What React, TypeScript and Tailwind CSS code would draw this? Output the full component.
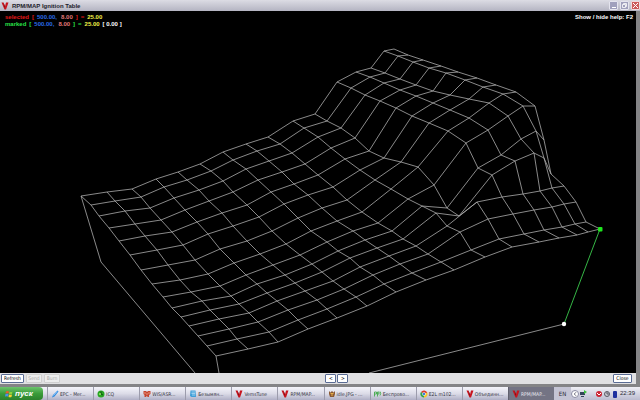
import React from 'react';
import { ChevronLeft } from 'lucide-react';

type Point = [number, number];

interface Task {
  label: string;
  icon: React.ReactNode;
  active?: boolean;
}

// ─── Surface data: one row per MAP bin, one point per RPM bin ─────────────────
const SURFACE: Point[][] = [
  [[81, 196], [107, 192], [132, 189], [156, 179], [178, 172], [200, 164], [223, 152], [246, 144], [268, 137], [293, 121], [315, 114], [337, 82], [356, 72], [371, 68], [384, 51], [394, 49]],
  [[91, 205], [115, 201], [141, 197], [164, 187], [187, 180], [211, 171], [233, 160], [257, 151], [280, 144], [304, 128], [327, 121], [351, 88], [370, 77], [385, 73], [398, 56], [408, 55]],
  [[99, 216], [125, 211], [150, 208], [174, 198], [199, 190], [223, 181], [246, 169], [269, 161], [292, 153], [318, 137], [341, 128], [365, 95], [384, 83], [400, 79], [413, 62], [423, 60]],
  [[109, 228], [135, 224], [161, 220], [185, 210], [209, 201], [233, 192], [258, 180], [282, 172], [305, 164], [331, 148], [355, 138], [380, 101], [400, 90], [416, 85], [429, 68], [441, 66]],
  [[119, 241], [145, 236], [172, 232], [197, 222], [222, 213], [247, 205], [271, 192], [294, 184], [318, 175], [345, 159], [369, 151], [396, 108], [416, 96], [433, 91], [446, 73], [458, 72]],
  [[130, 255], [157, 250], [183, 245], [208, 234], [233, 226], [259, 217], [284, 204], [308, 195], [333, 187], [360, 170], [384, 158], [412, 116], [433, 103], [450, 95], [465, 80], [477, 78]],
  [[141, 270], [168, 265], [195, 260], [220, 249], [247, 241], [272, 231], [298, 218], [322, 208], [347, 200], [375, 180], [401, 162], [429, 123], [450, 110], [469, 99], [483, 87], [496, 85]],
  [[152, 284], [180, 280], [208, 274], [234, 263], [260, 254], [286, 244], [311, 231], [337, 221], [362, 212], [391, 189], [418, 167], [448, 131], [469, 118], [489, 103], [503, 94], [516, 92]],
  [[163, 297], [191, 292], [220, 286], [246, 275], [273, 265], [300, 255], [327, 242], [353, 231], [378, 223], [408, 199], [434, 185], [466, 143], [488, 130], [508, 116], [523, 106], [535, 106]],
  [[172, 308], [202, 301], [231, 296], [257, 284], [285, 275], [312, 264], [338, 251], [365, 240], [392, 231], [422, 206], [447, 208], [478, 168], [501, 155], [521, 139], [536, 131], [544, 140]],
  [[181, 317], [210, 310], [239, 304], [267, 293], [295, 283], [322, 272], [350, 258], [377, 248], [403, 239], [436, 213], [459, 216], [492, 175], [515, 161], [534, 153], [544, 158], [551, 174]],
  [[189, 326], [219, 319], [249, 313], [277, 301], [305, 291], [333, 281], [360, 267], [389, 256], [416, 246], [447, 226], [477, 202], [502, 197], [523, 194], [540, 191], [552, 188], [564, 186]],
  [[198, 336], [229, 329], [258, 322], [288, 310], [317, 300], [344, 289], [373, 275], [400, 264], [428, 254], [460, 232], [488, 219], [513, 214], [534, 210], [552, 207], [564, 204], [576, 202]],
  [[207, 346], [237, 339], [269, 332], [298, 320], [327, 309], [356, 297], [384, 284], [412, 273], [441, 262], [471, 250], [499, 239], [524, 234], [544, 230], [562, 227], [575, 224], [586, 222]],
  [[216, 356], [248, 349], [278, 342], [308, 329], [337, 318], [367, 306], [396, 292], [426, 280], [454, 270], [485, 257], [512, 247], [539, 242], [559, 238], [577, 235], [588, 232], [600, 229]],
];

const COLUMNS: Point[][] = SURFACE[0].map((_, c) => SURFACE.map(row => row[c]));

const toPoints = (line: Point[]) => line.map(p => p.join(',')).join(' ');

// ─── Icons ────────────────────────────────────────────────────────────────────
const VemsIcon: React.FC = () => (
  <svg viewBox="0 0 16 16" className="h-2 w-2 shrink-0" aria-hidden="true">
    <path d="M1 1h4l3 8 2-8h5l-5 14H7z" fill="#c8141e" />
    <path d="M5 1l3 8-1 3z" fill="#6e0b12" />
  </svg>
);

const PenIcon: React.FC = () => (
  <svg viewBox="0 0 16 16" className="h-2 w-2 shrink-0" aria-hidden="true">
    <path d="M13 1l2 2-8 10-5 2 2-5z" fill="#2f8be0" />
    <path d="M12 3L5 11" stroke="#a9d6ff" strokeWidth="1.5" />
  </svg>
);

const IcqIcon: React.FC = () => (
  <svg viewBox="0 0 16 16" className="h-2 w-2 shrink-0" aria-hidden="true">
    <circle cx="8" cy="8" r="7" fill="#27a522" />
    <path d="M8 3v5l4 2" stroke="#0f4f12" strokeWidth="2" fill="none" />
    <circle cx="6" cy="8" r="2" fill="#9be86a" />
  </svg>
);

const WisIcon: React.FC = () => (
  <svg viewBox="0 0 16 16" className="h-2 w-2 shrink-0" aria-hidden="true">
    <path d="M1 2h5l2 2 2-2h5v6l-3 2v4H9l-1-3-2 3H3v-4L1 8z" fill="#c6452f" />
    <path d="M4 4v4M12 4v4M8 6v4" stroke="#f2b19c" strokeWidth="1.5" />
  </svg>
);

const NotepadIcon: React.FC = () => (
  <svg viewBox="0 0 16 16" className="h-2 w-2 shrink-0" aria-hidden="true">
    <path d="M3 1h10l1 13H5L2 12z" fill="#3f9fd8" />
    <path d="M5 4h7M5 7h7M6 10h6" stroke="#d8f1ff" strokeWidth="1.2" />
  </svg>
);

const ImageIcon: React.FC = () => (
  <svg viewBox="0 0 16 16" className="h-2 w-2 shrink-0" aria-hidden="true">
    <path d="M2 2l3 3 3-3 3 3 3-3v6l-2 6H4L2 8z" fill="#8b5a33" />
    <path d="M5 7h6M6 10h4" stroke="#e9b04c" strokeWidth="2" />
  </svg>
);

const WirelessIcon: React.FC = () => (
  <svg viewBox="0 0 16 16" className="h-2 w-2 shrink-0" aria-hidden="true">
    <path d="M1 13V4h4v4H1M7 13V4h3v4H7M12 3q3 3 0 8" stroke="#35a53c" strokeWidth="1.6" fill="none" />
  </svg>
);

const ChromeIcon: React.FC = () => (
  <svg viewBox="0 0 16 16" className="h-2 w-2 shrink-0" aria-hidden="true">
    <path d="M8 8L2 4a7 7 0 0 1 12.500 1.500z" fill="#dc3b2b" />
    <path d="M8 8l6.500-3A7 7 0 0 1 8 15z" fill="#f5c727" />
    <path d="M8 8v7A7 7 0 0 1 2 4z" fill="#36a24a" />
    <circle cx="8" cy="8" r="3.500" fill="#fff" />
    <circle cx="8" cy="8" r="2.500" fill="#3f7fdf" />
  </svg>
);

const WindowsFlag: React.FC = () => (
  <svg viewBox="0 0 16 14" className="h-2 w-2 shrink-0" aria-hidden="true">
    <path d="M2 2q3-2 6 0L7 6Q4 5 1 6z" fill="#f0592a" />
    <path d="M9 2q3 2 6 0l-1 5q-3 1-6 0z" fill="#8ed33c" />
    <path d="M1 7q3-1 6 0l-1 5q-3-1-6 0z" fill="#4a8df0" />
    <path d="M8 8q3 1 6 0l-1 5q-3 1-6 0z" fill="#f9cf2f" />
  </svg>
);

const TASKS: Task[] = [
  { label: 'EPC - Mer...', icon: <PenIcon /> },
  { label: 'ICQ', icon: <IcqIcon /> },
  { label: 'WIS/ASR...', icon: <WisIcon /> },
  { label: 'Безымян...', icon: <NotepadIcon /> },
  { label: 'VemsTune', icon: <VemsIcon /> },
  { label: 'RPM/MAP...', icon: <VemsIcon /> },
  { label: 'idle.JPG - ...', icon: <ImageIcon /> },
  { label: 'Беспрово...', icon: <WirelessIcon /> },
  { label: 'E2L m102...', icon: <ChromeIcon /> },
  { label: 'Объединн...', icon: <VemsIcon /> },
  { label: 'RPM/MAP...', icon: <VemsIcon />, active: true },
];

// ─── Window parts ─────────────────────────────────────────────────────────────
const TitleBar: React.FC = () => (
  <header className="flex h-[11px] shrink-0 items-center bg-linear-to-b from-[#dcdce4] to-[#b4b4c2] pl-px">
    <VemsIcon />
    <h1 className="ml-[3px] flex-1 font-['Liberation_Sans',sans-serif] text-[6px] leading-[8px] font-bold text-[#22222a]">
      RPM/MAP Ignition Table
    </h1>
    <div className="flex gap-[2px]">
      <button aria-label="Minimize" className="flex h-[9px] w-[9px] items-end justify-center rounded-[1px] border border-[#e4e4ee] bg-[#a0a0bc] pb-[1px]">
        <span className="h-[1px] w-[4px] bg-white" />
      </button>
      <button aria-label="Restore" className="flex h-[9px] w-[9px] items-center justify-center rounded-[1px] border border-[#e4e4ee] bg-[#a0a0bc]">
        <svg viewBox="0 0 5 5" className="h-[5px] w-[5px]" aria-hidden="true">
          <path d="M1.500 1.500V.5h3v3h-1M.5 1.500h3v3h-3z" stroke="#fff" strokeWidth="0.800" fill="none" />
        </svg>
      </button>
      <button aria-label="Close window" className="flex h-[9px] w-[9px] items-center justify-center rounded-[1px] border border-[#f0d8dc] bg-[#cc5a5c]">
        <svg viewBox="0 0 5 5" className="h-[5px] w-[5px]" aria-hidden="true">
          <path d="M0 0l5 5M5 0L0 5" stroke="#fff" />
        </svg>
      </button>
    </div>
  </header>
);

interface ReadoutLineProps {
  name: string;
  color: string;
  delta?: string;
}

const ReadoutLine: React.FC<ReadoutLineProps> = ({ name, color, delta }) => (
  <p className={`flex gap-[3px] ${color}`}>
    <span>{name}</span>
    <span>[</span>
    <span className="text-[#2a6be8]">500.00,</span>
    <span className="ml-px text-[#e07878]">8.00</span>
    <span>]</span>
    <span>=</span>
    <span className="text-[#f0f048]">25.00</span>
    {delta && <span className="text-white">[ {delta} ]</span>}
  </p>
);

const Readout: React.FC = () => (
  <div className="absolute top-[3px] left-[5px] text-[6px] leading-[7px] font-bold">
    <ReadoutLine name="selected" color="text-[#e01818]" />
    <ReadoutLine name="marked" color="text-[#28e048]" delta="0.00" />
  </div>
);

const SurfacePlot: React.FC = () => (
  <svg viewBox="0 11 636 362" className="h-full w-full" role="img" aria-label="Ignition table surface">
    <g fill="none" stroke="#acacac" strokeWidth="0.800">
      {SURFACE.map((row, i) => (
        <polyline key={`r${i}`} points={toPoints(row)} />
      ))}
      {COLUMNS.map((col, i) => (
        <polyline key={`c${i}`} points={toPoints(col)} />
      ))}
      <path d="M81 196L101 262L195 373M216 356L219 373M564 324L369 373" />
    </g>
    <path d="M600 229L564 324" stroke="#35b545" />
    <rect x="598" y="227" width="4.500" height="4.500" rx="1" fill="#1ee61e" />
    <circle cx="564" cy="324" r="2.200" fill="#fff" />
  </svg>
);

const BUTTON = 'h-[9px] rounded-[1px] border text-[5px] leading-[7px]';

const Toolbar: React.FC = () => (
  <div className="flex h-[11px] shrink-0 items-center bg-[#e0e0e2] pr-[4px] pl-px">
    <div className="flex flex-[8] gap-[2px]">
      <button className={`${BUTTON} w-[23px] border-[#5a6c94] bg-white text-black`}>Refresh</button>
      <button disabled className={`${BUTTON} w-[16px] border-[#cfcfcf] bg-[#ececec] text-[#a8a8a8]`}>Send</button>
      <button disabled className={`${BUTTON} w-[16px] border-[#cfcfcf] bg-[#ececec] text-[#a8a8a8]`}>Burn</button>
    </div>
    <div className="flex gap-[1px]">
      <button aria-label="Previous" className={`${BUTTON} w-[11px] border-[#5a6c94] bg-white text-black`}>&lt;</button>
      <button aria-label="Next" className={`${BUTTON} w-[11px] border-[#5a6c94] bg-white text-black`}>&gt;</button>
    </div>
    <div className="flex flex-[7] justify-end">
      <button className={`${BUTTON} w-[19px] border-[#5a6c94] bg-white text-black`}>Close</button>
    </div>
  </div>
);

const Tray: React.FC = () => (
  <div className="flex h-full w-[86px] shrink-0 items-center bg-linear-to-b from-[#f0f0f6] to-[#bcbcd0] text-[6px] text-[#2a2a34]">
    <span className="flex h-full w-[17px] items-center justify-center bg-[#c4c4d4]">EN</span>
    <button aria-label="Show hidden icons" className="flex h-[8px] w-[8px] items-center justify-center rounded-full border border-[#8c8ca4] bg-white">
      <ChevronLeft className="h-[6px] w-[6px] text-[#3c3c50]" strokeWidth={3} />
    </button>
    <svg viewBox="0 0 40 12" className="h-[12px] w-[40px]" aria-hidden="true">
      <path d="M1 4h5v3H1zM2 8h3v1H2z" fill="#34445a" />
      <path d="M5 2l3 2-3 2z" fill="#3cc03c" />
      <circle cx="20" cy="6" r="3" fill="#cc2433" />
      <path d="M18 5l2 2 2-2" stroke="#fff" fill="none" />
      <circle cx="28" cy="6" r="2.500" fill="#c8c8d0" stroke="#5a5a66" />
      <path d="M28 4v2h2" stroke="#5a5a66" fill="none" />
      <rect x="34" y="3" width="4" height="7" rx="1" fill="#1d2f9e" />
    </svg>
    <time className="ml-auto pr-[5px] font-['Liberation_Sans',sans-serif]">22:39</time>
  </div>
);

const Taskbar: React.FC = () => (
  <footer className="flex h-[13px] shrink-0 bg-linear-to-b from-[#f4f4fa] via-[#dcdce8] to-[#b0b0c6]">
    <button className="flex w-[43px] shrink-0 items-center gap-[2px] rounded-r-[4px] bg-linear-to-b from-[#6cc46c] via-[#3a9c3a] to-[#2c812c] pl-[5px] font-['Liberation_Sans',sans-serif] text-[8px] leading-[10px] font-bold text-white italic">
      <WindowsFlag /> пуск
    </button>
    <nav className="ml-[4px] flex min-w-0 flex-1" aria-label="Open windows">
      {TASKS.map((task, i) => (
        <button
          key={i}
          className={`flex min-w-0 flex-1 items-center gap-px overflow-hidden border-l pl-[3px] text-[5px] leading-[8px] whitespace-nowrap ${
            task.active ? 'border-[#60606e] bg-[#747484] text-[#e8e8f0]' : 'border-[#9c9cac] text-[#33333f]'
          }`}
        >
          {task.icon}
          {task.label}
        </button>
      ))}
    </nav>
    <Tray />
  </footer>
);

const App: React.FC = () => (
  <div className="flex h-screen flex-col overflow-hidden bg-[#848486] font-['DejaVu_Sans_Condensed','Liberation_Sans',sans-serif]">
    <TitleBar />
    <div className="mr-[4px] flex min-h-0 flex-1 flex-col">
      <main className="relative min-h-0 flex-1 bg-black font-['Liberation_Sans',sans-serif]">
        <SurfacePlot />
        <Readout />
        <p className="absolute top-[3px] right-[3px] text-[6px] leading-[7px] font-bold text-white">Show / hide help: F2</p>
      </main>
      <Toolbar />
    </div>
    <div className="h-[3px] shrink-0" />
    <Taskbar />
  </div>
);

export default App;
